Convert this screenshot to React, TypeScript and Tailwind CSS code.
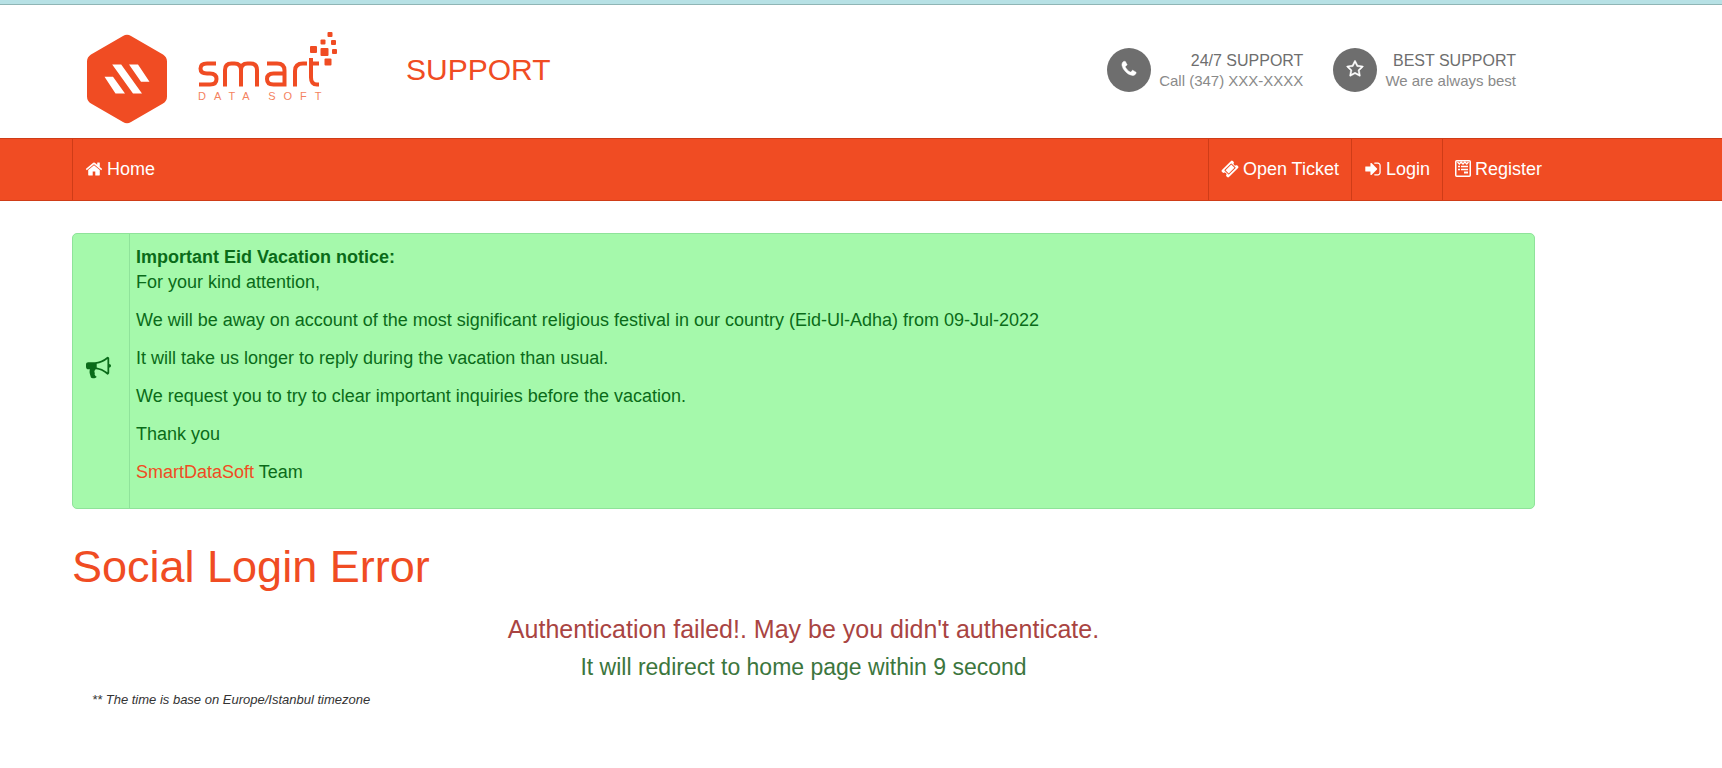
import type { ReactNode } from "react";

const FONT = "font-['Liberation_Sans',Arial,sans-serif]";

interface GlyphProps {
  d: string;
  className?: string;
}

function Glyph({ d, className }: GlyphProps) {
  return (
    <svg viewBox="0 0 1792 1792" fill="currentColor" className={className} aria-hidden="true">
      <path d={d} />
    </svg>
  );
}

const icons = {
  home: "M1472 992v480q0 26-19 45t-45 19h-384v-384h-256v384h-384q-26 0-45-19t-19-45v-480q0-1 .5-3t.5-3l575-474 575 474q1 2 1 6zm223-69l-62 74q-8 9-21 11h-3q-13 0-21-7l-692-577-692 577q-12 8-24 7-13-2-21-11l-62-74q-8-10-7-23.5t11-21.5l719-599q32-26 76-26t76 26l244 204v-195q0-14 9-23t23-9h192q14 0 23 9t9 23v408l219 182q10 8 11 21.5t-7 23.5z",
  phone:
    "M1600 1240q0 27-10 70.5t-21 68.5q-21 50-122 106-94 51-186 51-27 0-52.5-3.5t-57.5-12.5-47.5-14.5-55.5-20.5-49-18q-98-35-175-83-128-79-264.5-215.5t-215.5-264.5q-48-77-83-175-3-9-18-49t-20.5-55.5-14.5-47.5-12.5-57.5-3.5-52.5q0-92 51-186 56-101 106-122 25-11 68.5-21t70.5-10q14 0 21 3 18 6 53 76 11 19 30 54t35 63.5 31 53.5q3 4 17.5 25t21.5 35.5 7 28.5q0 20-28.5 50t-62 55-62 53-28.5 46q0 9 5 22.5t8.5 20.5 14 24 11.5 19q76 137 174 235t235 174q2 1 19 11.5t24 14 20.5 8.5 22.5 5q18 0 46-28.5t53-62 55-62 50-28.5q14 0 28.5 7t35.5 21.5 25 17.5q25 15 53.5 31t63.5 35 54 30q70 35 76 53 3 7 3 21z",
  star: "M1201 1004l306-297-422-62-189-382-189 382-422 62 306 297-73 421 378-199 377 199zm527-357q0 22-26 48l-363 354 86 500q1 7 1 20 0 50-41 50-19 0-40-12l-449-236-449 236q-22 12-40 12-21 0-31.5-14.5t-10.5-35.5q0-6 2-20l86-500-364-354q-25-27-25-48 0-37 56-46l502-73 225-455q19-41 49-41t49 41l225 455 502 73q56 9 56 46z",
  ticket:
    "M1024 452l316 316-572 572-316-316zm-211 979l618-618q19-19 19-45t-19-45l-362-362q-18-18-45-18t-45 18l-618 618q-19 19-19 45t19 45l362 362q18 18 45 18t45-18zm889-637l-907 908q-37 37-90.5 37t-90.5-37l-126-126q56-56 56-136t-56-136-136-56-136 56l-125-126q-37-37-37-90.5t37-90.5l907-906q37-37 90.5-37t90.5 37l125 125q-56 56-56 136t56 136 136 56 136-56l126 125q37 37 37 90.5t-37 90.5z",
  signIn:
    "M1312 896q0 26-19 45l-544 544q-19 19-45 19t-45-19-19-45v-288h-448q-26 0-45-19t-19-45v-384q0-26 19-45t45-19h448v-288q0-26 19-45t45-19 45 19l544 544q19 19 19 45zm352-352v704q0 119-84.5 203.5t-203.5 84.5h-320q-13 0-22.5-9.5t-9.5-22.5q0-4-1-20t-.5-26.5 3-23.5 10-19.5 20.5-6.5h320q66 0 113-47t47-113v-704q0-66-47-113t-113-47h-312l-11.5-1-11.5-3-8-5.500-7-9-2-13.500q0-4-1-20t-.5-26.500 3-23.500 10-19.500 20.500-6.500h320q119 0 203.500 84.500t84.500 203.500z",
  bullhorn:
    "M1664 640q53 0 90.5 37.5t37.5 90.5-37.5 90.5-90.5 37.5v384q0 52-38 90t-90 38q-417-347-812-380-58 19-91 66t-31 100.5 40 92.5q-20 33-23 65.5t6 58 33.5 55 48 50 61.5 50.5q-29 58-111.5 83t-168.5 11.5-132-55.5q-7-23-29.5-87.5t-32-94.5-23-89-15-101 3.5-98.5 22-110.5h-122q-66 0-113-47t-47-113v-192q0-66 47-113t113-47h480q435 0 896-384 52 0 90 38t38 90v384zm-128 604v-954q-394 302-768 343v270q377 42 768 341z",
};

function RegisterIcon() {
  return (
    <svg viewBox="0 0 16 17" className="h-[17px] w-4" fill="none" stroke="currentColor" aria-hidden="true">
      <rect x="0.75" y="0.75" width="14.5" height="15.5" rx="1" strokeWidth="1.5" />
      <path d="M2.5 2l1.8 2L6.1 2l1.9 2 1.9-2 1.9 2 1.7-2" strokeWidth="1.3" />
      <path d="M3 6.5h2M6 6.5h7M3 9.5h2M6 9.5h7" strokeWidth="1.5" />
      <path d="M9 12.5h4" strokeWidth="2" />
    </svg>
  );
}

function Logo() {
  return (
    <svg viewBox="0 0 260 96" className="mt-2.5 h-24 w-[260px]" role="img" aria-label="Smart Data Soft">
      <path
        d="M43 7q4-2.5 8 0l32 18.5q4 2.5 4 7v35q0 4.500-4 7L51 93q-4 2.500-8 0L11 74.500q-4-2.500-4-7v-35q0-4.500 4-7z"
        fill="#f04c23"
      />
      <path
        d="M24.500 47.700h8.500l12 16.800h-9.500zM32.200 35.500h9l20.800 29h-9zM49 35.500h9l11.500 17.200h-8.500z"
        fill="#fff"
      />
      <g fill="none" stroke="#f04c23" strokeWidth="4">
        <path d="M136 34.500h-9q-6.500 0-6.500 5t6.500 5h3q6.500 0 6.500 5.500t-6.500 5.500h-11" />
        <path d="M145 57.500V41q0-6.500 6.500-6.500h3q6.500 0 6.500 6.500v16.500M161 41q0-6.500 6.500-6.500h3q6.500 0 6.500 6.500v16.500" />
        <path d="M187 34.500h10q7.500 0 7.500 7v14h-11q-6.500 0-6.500-5.500t6.500-5.500h11" />
        <path d="M215 57.500V42q0-7.500 8-7.500h4" />
        <path d="M231 29v19.500q0 7 6 7h2M231 34.500h8" />
      </g>
      <g fill="#f04c23">
        <rect x="230" y="17" width="7" height="7" rx="1" />
        <rect x="240.500" y="19" width="8" height="8" rx="1" />
        <rect x="244.500" y="29.500" width="7" height="7" rx="1" />
        <rect x="240.500" y="10.500" width="5" height="5" rx="1" />
        <rect x="251" y="11" width="5" height="5" rx="1" />
        <rect x="247.500" y="3" width="5" height="5" rx="1" />
        <rect x="252" y="20" width="5" height="5" rx="1" />
      </g>
      <text x="118" y="71" fontSize="11" fill="#f4835f" className="tracking-[8px]">
        DATA SOFT
      </text>
    </svg>
  );
}

interface ContactProps {
  icon: string;
  title: string;
  text: string;
}

function Contact({ icon, title, text }: ContactProps) {
  return (
    <div className="flex items-center gap-2">
      <span className="grid h-11 w-11 place-items-center rounded-full bg-[#6e6e6e] pb-0.5 text-white">
        <Glyph d={icon} className="h-[18px] w-[18px] stroke-current stroke-[50px]" />
      </span>
      <div className="pt-0.5 text-right">
        <p className="text-base leading-5 text-[#6e6e6e]">{title}</p>
        <p className="text-[15px] leading-5 text-[#8a8a8a]">{text}</p>
      </div>
    </div>
  );
}

interface NavItemProps {
  icon: ReactNode;
  label: string;
}

function NavItem({ icon, label }: NavItemProps) {
  return (
    <a href="#" className="flex items-center gap-1 border-l border-[#cf3c17] px-3 pb-0.5">
      {icon}
      <span>{label}</span>
    </a>
  );
}

const notice = [
  "We will be away on account of the most significant religious festival in our country (Eid-Ul-Adha) from 09-Jul-2022",
  "It will take us longer to reply during the vacation than usual.",
  "We request you to try to clear important inquiries before the vacation.",
  "Thank you",
];

export default function App() {
  return (
    <div className={`${FONT} bg-white text-[#333]`}>
      <div className="h-[5px] border-b border-[#8fb5b5] bg-[#b7e1e5]" />

      <header className="mr-[206px] ml-20 flex h-[133px] items-center justify-between">
        <div className="flex items-center">
          <Logo />
          <p className="ml-[66px] pb-1 text-3xl text-[#f04c23]">SUPPORT</p>
        </div>
        <div className="flex gap-[30px] pb-1">
          <Contact icon={icons.phone} title="24/7 SUPPORT" text="Call (347) XXX-XXXX" />
          <Contact icon={icons.star} title="BEST SUPPORT" text="We are always best" />
        </div>
      </header>

      <nav className="h-[63px] border-y border-[#cf3c17] bg-[#f04c23] text-lg text-white">
        <div className="mr-[168px] ml-[72px] flex h-full justify-between">
          <NavItem icon={<Glyph d={icons.home} className="h-[18px] w-[18px]" />} label="Home" />
          <div className="flex">
            <NavItem icon={<Glyph d={icons.ticket} className="h-[18px] w-[18px]" />} label="Open Ticket" />
            <NavItem icon={<Glyph d={icons.signIn} className="h-[18px] w-[18px]" />} label="Login" />
            <NavItem icon={<RegisterIcon />} label="Register" />
          </div>
        </div>
      </nav>

      <main className="mr-[187px] ml-[72px] pt-8">
        <section className="flex rounded-[5px] border border-[#8fe39a] bg-[#a5f9ab] text-lg leading-[25px] text-[#0a6b19]">
          <div className="flex w-14 items-center pb-2 pl-[13px]">
            <Glyph d={icons.bullhorn} className="h-[25px] w-[25px]" />
          </div>
          <div className="flex-1 border-l border-[#8fe39a] px-1.5 pt-[11px] pb-[23px]">
            <strong>Important Eid Vacation notice:</strong>
            <p>For your kind attention,</p>
            {notice.map((line) => (
              <p key={line} className="mt-[13px]">
                {line}
              </p>
            ))}
            <p className="mt-[13px]">
              <a href="#" className="text-[#f04c23]">
                SmartDataSoft
              </a>{" "}
              Team
            </p>
          </div>
        </section>

        <h1 className="mt-[33px] text-[45px] leading-[50px] text-[#f04c23]">Social Login Error</h1>
        <div className="mt-[18px] text-center">
          <p className="text-[25px] leading-[38px] text-[#a94442]">Authentication failed!. May be you didn't authenticate.</p>
          <p className="text-[23px] leading-[38px] text-[#3c763d]">It will redirect to home page within 9 second</p>
        </div>
        <p className="pl-5 text-[13px] leading-7 italic">** The time is base on Europe/Istanbul timezone</p>
      </main>
    </div>
  );
}
